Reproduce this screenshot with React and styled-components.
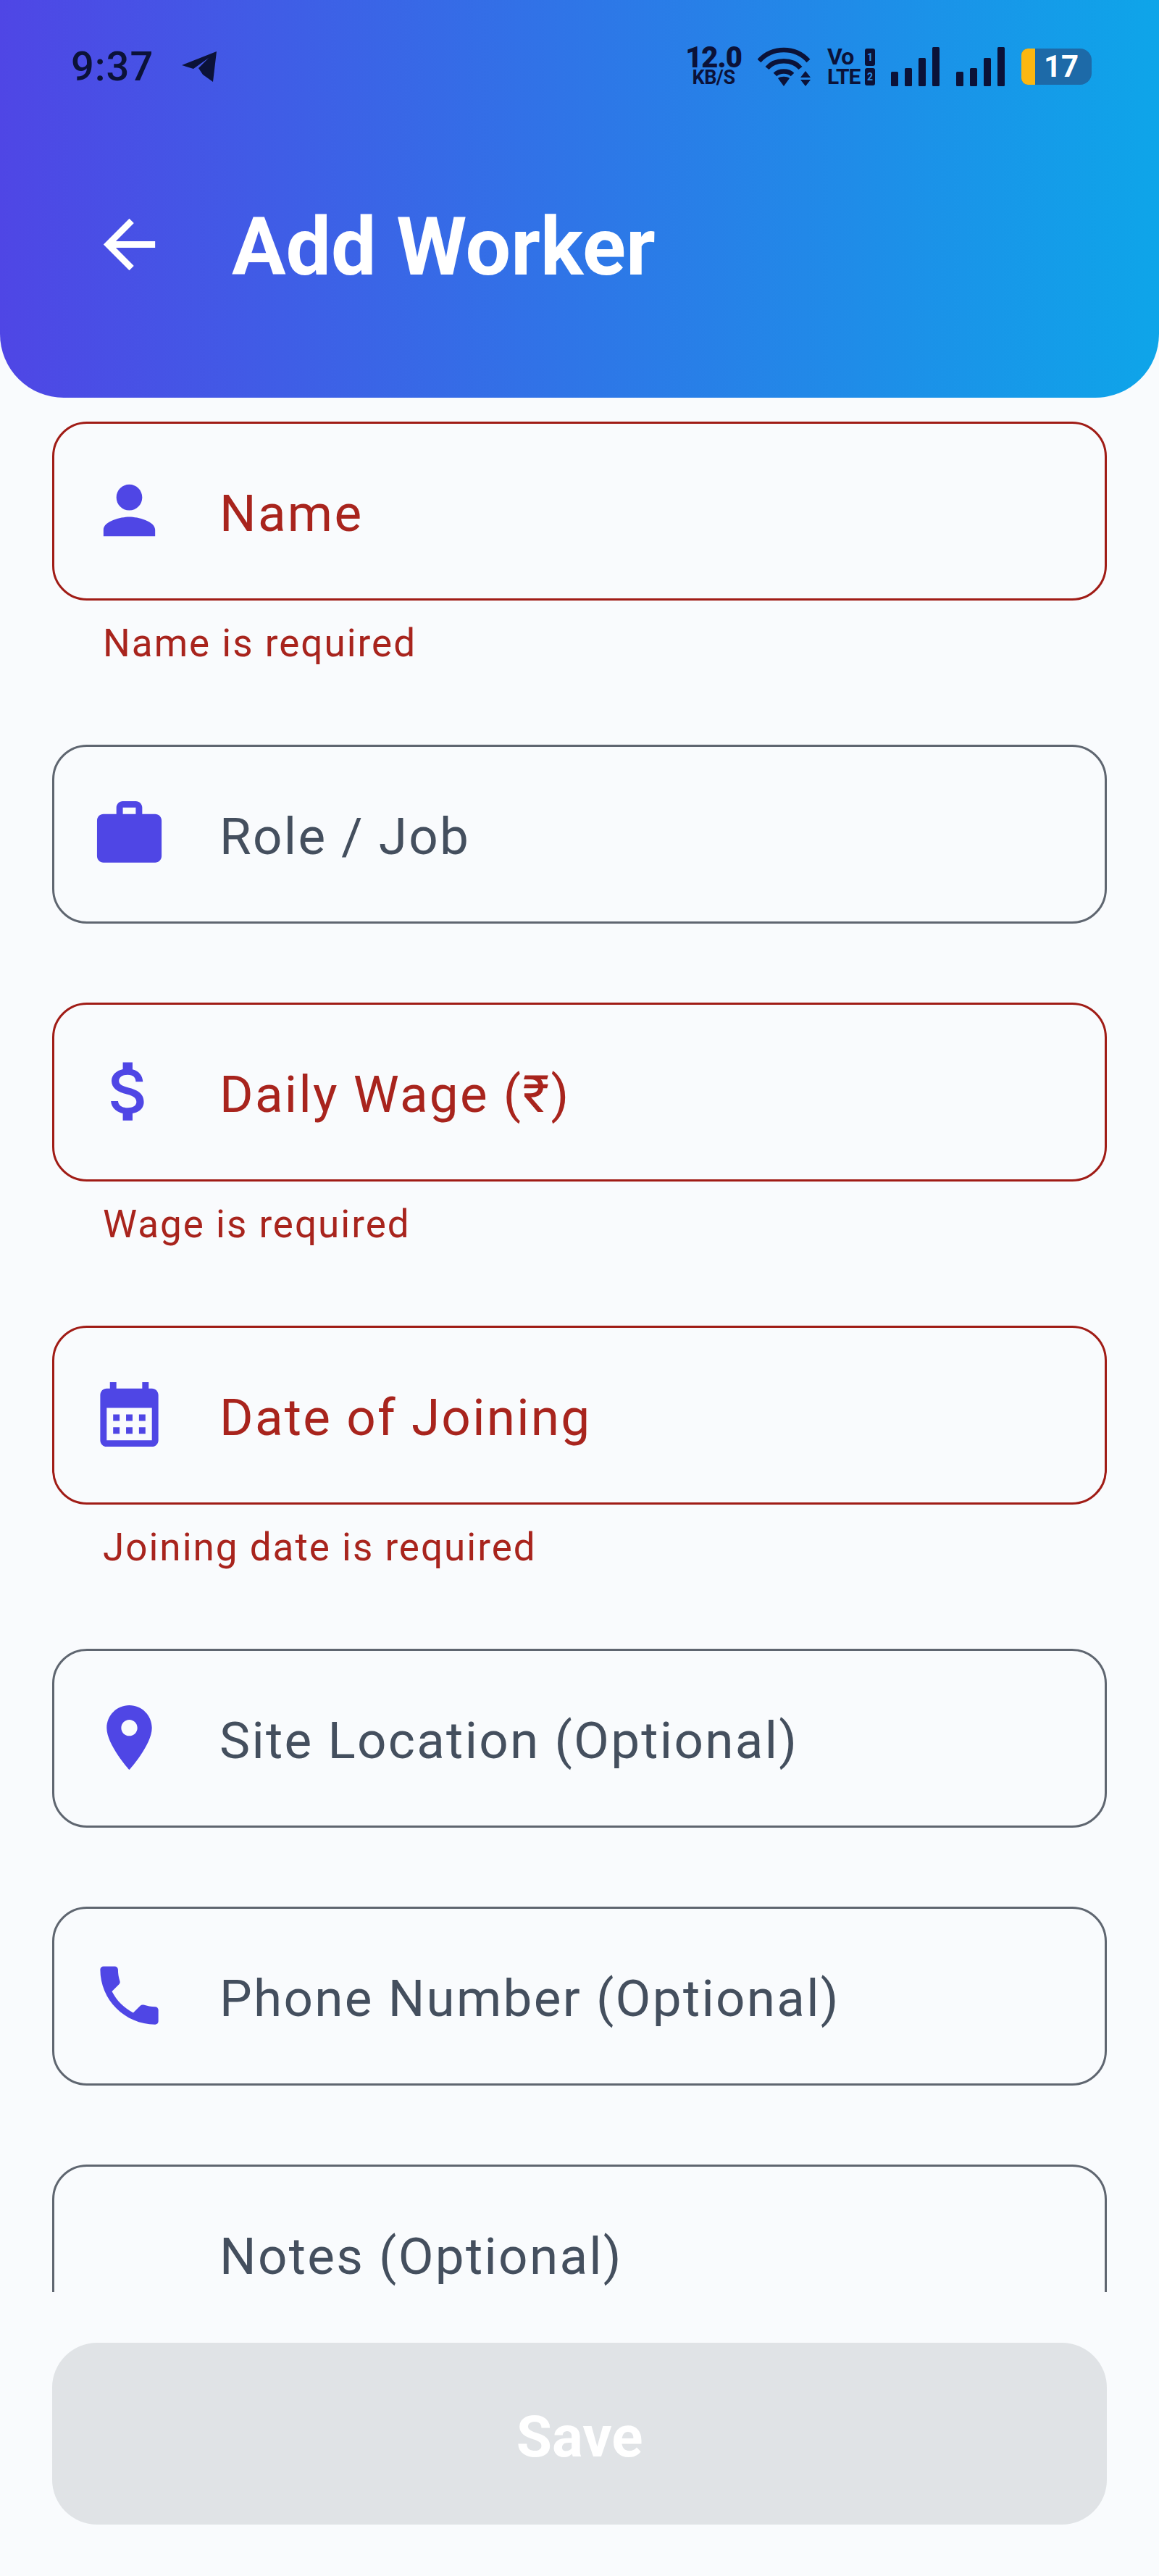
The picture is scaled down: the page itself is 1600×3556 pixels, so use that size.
import React from 'react';
import styled, { createGlobalStyle } from 'styled-components';

const GlobalStyle = createGlobalStyle`
  html, body {
    margin: 0;
    padding: 0;
    background: #f9fbfd;
  }
  * {
    box-sizing: border-box;
  }
`;

const Screen = styled.div`
  display: flex;
  flex-direction: column;
  width: 1600px;
  height: 3556px;
  overflow: hidden;
  background: #f9fbfd;
  font-family: Roboto, "Liberation Sans", sans-serif;
`;

const Header = styled.header`
  flex: 0 0 549px;
  background: linear-gradient(90deg, #4f46e5 0%, #0ea5e9 100%);
  border-radius: 0 0 88px 88px;
`;

const StatusBar = styled.div`
  display: flex;
  justify-content: space-between;
  align-items: center;
  height: 184px;
  padding: 0 93px 0 98px;
  color: #0b1238;
`;

const StatusLeft = styled.div`
  display: flex;
  align-items: center;
  gap: 38px;
`;

const Clock = styled.span`
  font-size: 56px;
  font-weight: 500;
  letter-spacing: 1px;
  line-height: 1;
`;

const StatusRight = styled.div`
  display: flex;
  align-items: center;
  gap: 22px;
`;

const NetSpeed = styled.div`
  display: flex;
  flex-direction: column;
  align-items: center;
  width: 78px;
  font-weight: 700;

  b {
    font-size: 40px;
    line-height: 30px;
    letter-spacing: -1px;
  }
  small {
    font-size: 27px;
    line-height: 25px;
    letter-spacing: -0.5px;
    font-weight: 700;
  }
`;

const SimGrid = styled.div`
  display: grid;
  grid-template-columns: 50px 14px;
  grid-auto-rows: 27px;
  column-gap: 2px;
  align-items: center;
  font-weight: 700;
`;

const SimLabel = styled.span`
  font-size: ${p => p.$size}px;
  line-height: 27px;
  letter-spacing: -1px;
`;

const SimTag = styled.span`
  display: block;
  height: 24px;
  border-radius: 3px;
  background: #0b1238;
  color: #2a8fe6;
  font-size: 14px;
  line-height: 24px;
  text-align: center;
`;

const Battery = styled.div`
  display: flex;
  align-items: stretch;
  width: 97px;
  height: 50px;
  border-radius: 9px 16px 16px 9px;
  overflow: hidden;
  background: #1d6aa8;
`;

const BatteryLevel = styled.div`
  flex: 0 0 19px;
  background: #fcb711;
`;

const BatteryText = styled.span`
  flex: 1;
  padding-right: 6px;
  color: #fff;
  font-size: 42px;
  font-weight: 700;
  line-height: 50px;
  text-align: center;
`;

const TopBar = styled.div`
  display: flex;
  align-items: center;
  height: 306px;
  padding-left: 125px;
  gap: 88px;
  color: #fff;
`;

const BackSlot = styled.div`
  flex: 0 0 107px;
  height: 107px;

  svg {
    display: block;
    width: 107px;
    height: 107px;
    fill: #fff;
  }
`;

const Title = styled.h1`
  margin: 0;
  padding-top: 8px;
  font-size: 111px;
  font-weight: 700;
  line-height: 1;
`;

const ScrollArea = styled.main`
  flex: 1;
  min-height: 0;
  overflow: hidden;
  padding: 33px 72px 0;
`;

const FieldGroup = styled.div`
  margin-bottom: 109px;
`;

const Field = styled.div`
  display: flex;
  align-items: flex-start;
  width: 100%;
  height: ${p => (p.$tall ? 420 : 247)}px;
  padding-left: 50px;
  border: 3px solid ${p => (p.$error ? '#a01c16' : '#5f6670')};
  border-radius: 48px;
`;

const IconSlot = styled.div`
  flex: 0 0 107px;
  height: 107px;
  margin: 66px 71px 0 0;
  color: #4f46e5;

  svg {
    display: block;
    width: 107px;
    height: 107px;
    fill: currentColor;
  }
`;

const Label = styled.span`
  margin-top: 62px;
  font-size: 71px;
  line-height: 124px;
  letter-spacing: 2.3px;
  color: ${p => (p.$error ? '#a8241d' : '#444f5e')};
`;

const ErrorText = styled.div`
  height: 90px;
  padding: 29px 0 0 70px;
  font-size: 53px;
  line-height: 61px;
  letter-spacing: 2px;
  color: #a8241d;
`;

const Footer = styled.footer`
  flex: 0 0 392px;
  padding: 70px 72px 0;
`;

const SaveButton = styled.button`
  display: block;
  width: 100%;
  height: 251px;
  padding: 8px 0 0;
  border: none;
  border-radius: 62px;
  background: #e0e3e6;
  color: #fff;
  font-family: inherit;
  font-size: 80px;
  font-weight: 700;
`;

const MaterialIcon = ({ d }) => (
  <svg viewBox="0 0 24 24" aria-hidden="true">
    <path d={d} />
  </svg>
);

const icons = {
  back: 'M20 11H7.83l5.59-5.59L12 4l-8 8 8 8 1.41-1.41L7.83 13H20v-2z',
  person:
    'M12 12c2.21 0 4-1.79 4-4s-1.79-4-4-4-4 1.79-4 4 1.79 4 4 4zm0 2c-2.67 0-8 1.34-8 4v2h16v-2c0-2.66-5.33-4-8-4z',
  work: 'M20 6h-4V4c0-1.11-.89-2-2-2h-4c-1.11 0-2 .89-2 2v2H4c-1.11 0-1.99.89-1.99 2L2 19c0 1.11.89 2 2 2h16c1.11 0 2-.89 2-2V8c0-1.11-.89-2-2-2zm-6 0h-4V4h4v2z',
  money:
    'M11.8 10.9c-2.27-.59-3-1.2-3-2.15 0-1.09 1.01-1.85 2.7-1.85 1.78 0 2.44.85 2.5 2.1h2.21c-.07-1.72-1.12-3.3-3.21-3.81V3h-3v2.16c-1.94.42-3.5 1.68-3.5 3.61 0 2.31 1.91 3.46 4.7 4.13 2.5.6 3 1.48 3 2.41 0 .69-.49 1.79-2.7 1.79-2.06 0-2.87-.92-2.98-2.1h-2.2c.12 2.19 1.76 3.42 3.68 3.83V21h3v-2.15c1.95-.37 3.5-1.5 3.5-3.55 0-2.84-2.43-3.81-4.7-4.4z',
  calendar:
    'M19 4h-1V2h-2v2H8V2H6v2H5c-1.1 0-2 .9-2 2v14c0 1.1.9 2 2 2h14c1.1 0 2-.9 2-2V6c0-1.1-.9-2-2-2zm0 16H5V10h14v10zM9 14H7v-2h2v2zm4 0h-2v-2h2v2zm4 0h-2v-2h2v2zm-8 4H7v-2h2v2zm4 0h-2v-2h2v2zm4 0h-2v-2h2v2z',
  place:
    'M12 2C8.13 2 5 5.13 5 9c0 5.25 7 13 7 13s7-7.75 7-13c0-3.87-3.13-7-7-7zm0 9.5c-1.38 0-2.5-1.12-2.5-2.5s1.12-2.5 2.5-2.5 2.5 1.12 2.5 2.5-1.12 2.5-2.5 2.5z',
  phone:
    'M6.62 10.79c1.44 2.83 3.76 5.14 6.59 6.59l2.2-2.2c.27-.27.67-.36 1.02-.24 1.12.37 2.33.57 3.57.57.55 0 1 .45 1 1V20c0 .55-.45 1-1 1-9.39 0-17-7.61-17-17 0-.55.45-1 1-1h3.5c.55 0 1 .45 1 1 0 1.25.2 2.45.57 3.57.11.35.03.74-.25 1.02l-2.2 2.2z',
};

const PlaneIcon = () => (
  <svg width="50" height="44" viewBox="0 0 50 44" fill="#0b1238">
    <path d="M49 1 L44 43 L30 33 L24 24 L38 10 L17 25 L1 20 Z" />
  </svg>
);

const WifiIcon = () => (
  <svg width="74" height="54" viewBox="0 0 74 54" fill="none" stroke="#0b1238" strokeWidth="6.5">
    <path d="M2 19 C20 -1 52 -1 70 19" />
    <path d="M13 29 C24 16 48 16 59 29" />
    <path d="M24 38 C30 32 42 32 48 38" />
    <path d="M28 43 L36 54 L44 43 C40 40 32 40 28 43 Z" fill="#0b1238" stroke="none" />
    <path d="M66 33 L73 42 L59 42 Z M66 54 L73 45 L59 45 Z" fill="#0b1238" stroke="none" />
  </svg>
);

const SignalIcon = () => (
  <svg width="68" height="54" viewBox="0 0 68 54" fill="#0b1238">
    <rect x="0" y="34" width="10" height="20" rx="1.5" />
    <rect x="19" y="29" width="10" height="25" rx="1.5" />
    <rect x="38" y="15" width="10" height="39" rx="1.5" />
    <rect x="57" y="0" width="10" height="54" rx="1.5" />
  </svg>
);

const fields = [
  { label: 'Name', icon: 'person', error: 'Name is required' },
  { label: 'Role / Job', icon: 'work' },
  { label: 'Daily Wage (₹)', icon: 'money', error: 'Wage is required' },
  { label: 'Date of Joining', icon: 'calendar', error: 'Joining date is required' },
  { label: 'Site Location (Optional)', icon: 'place' },
  { label: 'Phone Number (Optional)', icon: 'phone' },
  { label: 'Notes (Optional)', tall: true },
];

function FormField({ label, icon, error, tall }) {
  return (
    <FieldGroup>
      <Field $error={!!error} $tall={tall}>
        <IconSlot>{icon && <MaterialIcon d={icons[icon]} />}</IconSlot>
        <Label $error={!!error}>{label}</Label>
      </Field>
      {error && <ErrorText>{error}</ErrorText>}
    </FieldGroup>
  );
}

export default function App() {
  return (
    <Screen>
      <GlobalStyle />
      <Header>
        <StatusBar>
          <StatusLeft>
            <Clock>9:37</Clock>
            <PlaneIcon />
          </StatusLeft>
          <StatusRight>
            <NetSpeed>
              <b>12.0</b>
              <small>KB/S</small>
            </NetSpeed>
            <WifiIcon />
            <SimGrid>
              <SimLabel $size={32}>Vo</SimLabel>
              <SimTag>1</SimTag>
              <SimLabel $size={30}>LTE</SimLabel>
              <SimTag>2</SimTag>
            </SimGrid>
            <SignalIcon />
            <SignalIcon />
            <Battery>
              <BatteryLevel />
              <BatteryText>17</BatteryText>
            </Battery>
          </StatusRight>
        </StatusBar>
        <TopBar>
          <BackSlot>
            <MaterialIcon d={icons.back} />
          </BackSlot>
          <Title>Add Worker</Title>
        </TopBar>
      </Header>
      <ScrollArea>
        {fields.map(f => (
          <FormField key={f.label} {...f} />
        ))}
      </ScrollArea>
      <Footer>
        <SaveButton type="button">Save</SaveButton>
      </Footer>
    </Screen>
  );
}
